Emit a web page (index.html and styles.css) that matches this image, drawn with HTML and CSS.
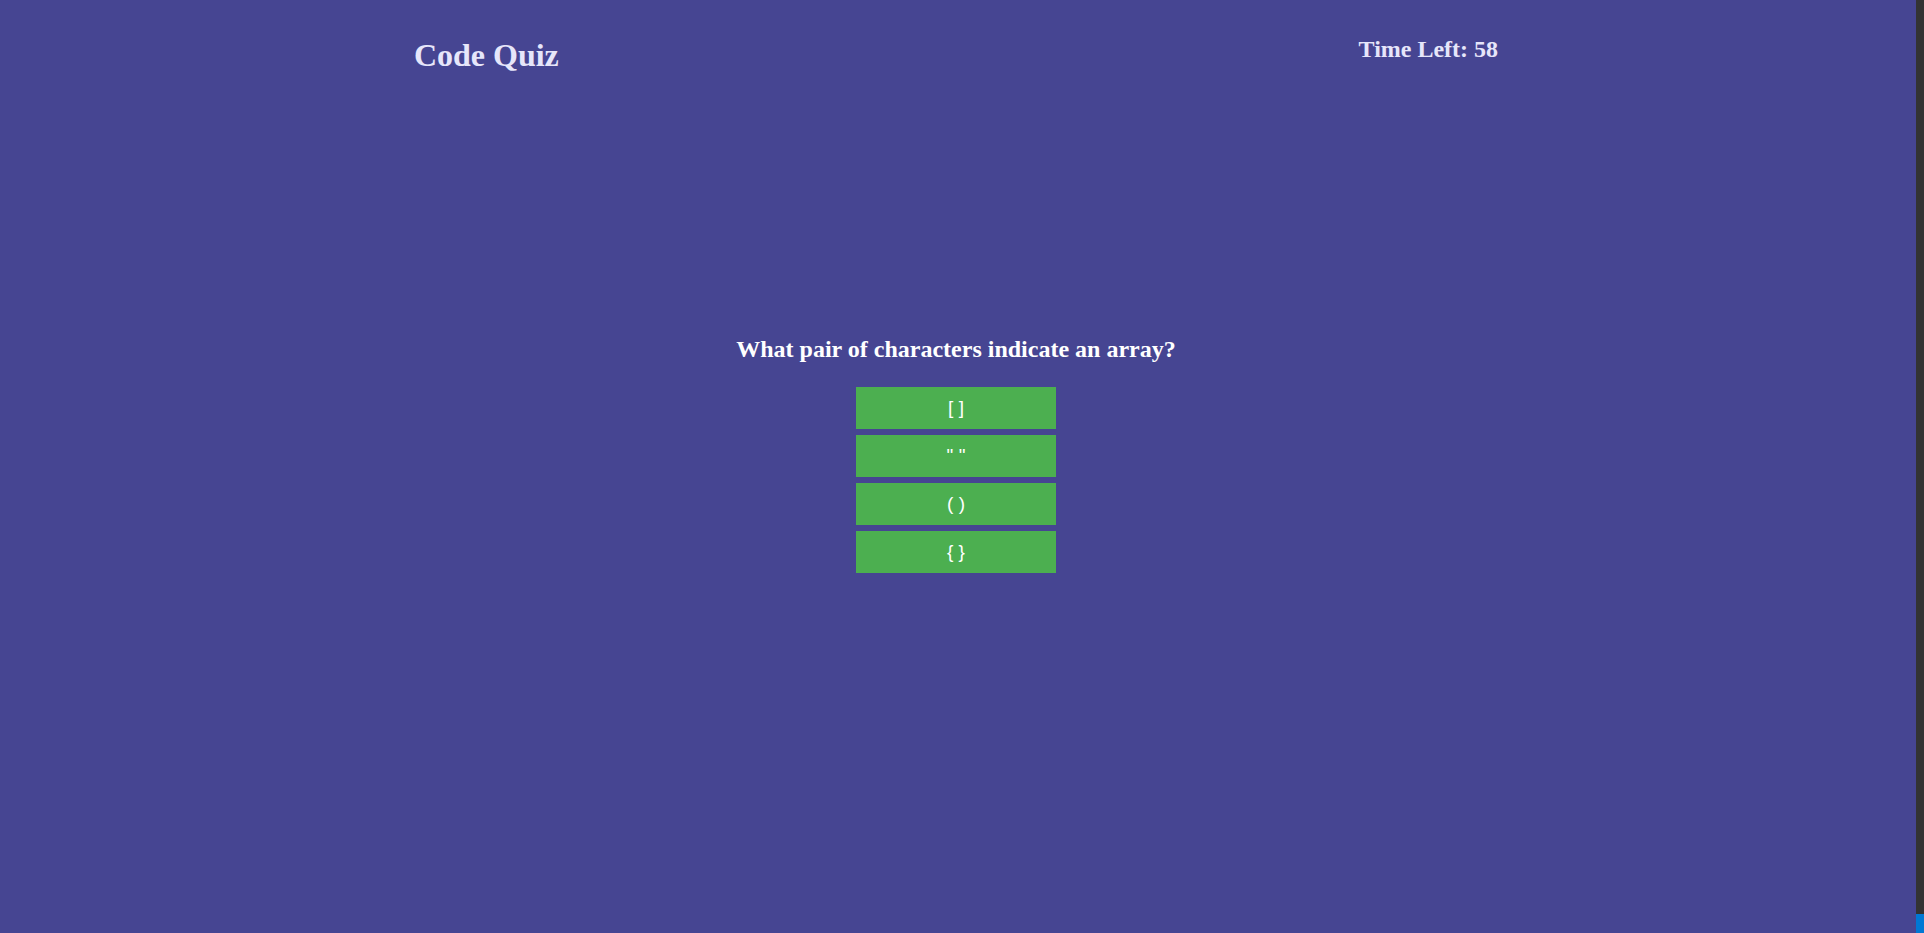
FILE: index.html
```html
<!DOCTYPE html>
<html>
<head>
<meta charset="utf-8">
<link rel="stylesheet" href="styles.css">
</head>
<body>
<div class="frame">
  <div class="page">
    <header class="header">
      <h1 class="title">Code Quiz</h1>
      <h2 class="timer">Time Left: 58</h2>
    </header>
    <main class="quiz">
      <h2 class="question">What pair of characters indicate an array?</h2>
      <div class="answers">
        <button class="answer">[ ]</button>
        <button class="answer">" "</button>
        <button class="answer">( )</button>
        <button class="answer">{ }</button>
      </div>
    </main>
  </div>
  <div class="edge">
    <div class="edge-fill"></div>
    <div class="edge-accent"></div>
  </div>
</div>
</body>
</html>
```
FILE: styles.css
```css
html, body {
  margin: 0;
  padding: 0;
  height: 100%;
  overflow: hidden;
}
body {
  font-family: "Liberation Serif", "Times New Roman", serif;
  background: #464592;
}
.frame {
  display: flex;
  height: 933px;
}
.page {
  flex: 1;
  padding: 16px 18px 0 14px;
  background: #464592;
}
.edge {
  width: 8px;
  display: flex;
  flex-direction: column;
}
.edge-fill {
  flex: 1;
  background: #333333;
}
.edge-accent {
  height: 19px;
  background: #0078d4;
}
.header {
  display: flex;
  justify-content: space-around;
  align-items: flex-start;
}
.title {
  font-size: 32px;
  font-weight: bold;
  color: #e6e6fa;
  margin: 21px 0;
}
.timer {
  font-size: 24px;
  font-weight: bold;
  color: #e6e6fa;
  margin: 20px 0;
}
.quiz {
  display: flex;
  flex-direction: column;
  align-items: center;
  padding-top: 241px;
}
.question {
  font-size: 24px;
  font-weight: bold;
  color: #ffffff;
  margin: 0 0 24px;
}
.answers {
  display: flex;
  flex-direction: column;
  gap: 6px;
}
.answer {
  width: 200px;
  height: 42px;
  background: #4caf50;
  color: #ffffff;
  border: none;
  font-family: "Liberation Sans", Arial, sans-serif;
  font-size: 19px;
  padding: 0;
}
```
